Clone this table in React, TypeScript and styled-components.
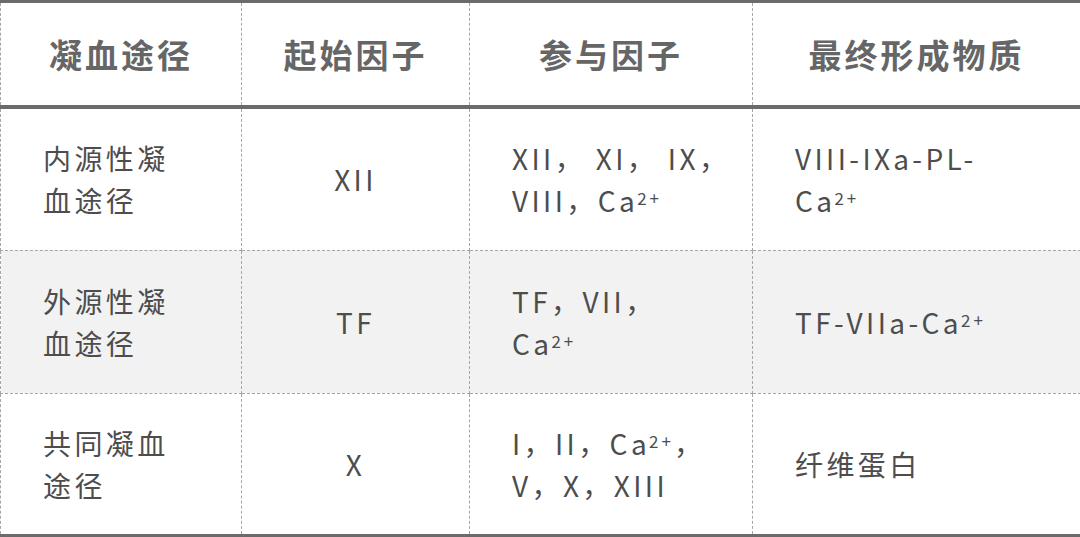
import React, { FC } from "react";
import styled, { createGlobalStyle } from "styled-components";

const LINE_COLOR = "#6b6b6b";
const DASH_COLOR = "#a6a6a6";
const ION = "²⁺";

interface PathRow {
  name: string[];
  start: string;
  factors: string[];
  product: string[];
}

const COLUMNS = ["凝血途径", "起始因子", "参与因子", "最终形成物质"];

const ROWS: PathRow[] = [
  {
    name: ["内源性凝", "血途径"],
    start: "XII",
    factors: ["XII， XI， IX，", "VIII，Ca²⁺"],
    product: ["VIII-IXa-PL-", "Ca²⁺"],
  },
  {
    name: ["外源性凝", "血途径"],
    start: "TF",
    factors: ["TF，VII，", "Ca²⁺"],
    product: ["TF-VIIa-Ca²⁺"],
  },
  {
    name: ["共同凝血", "途径"],
    start: "X",
    factors: ["I，II，Ca²⁺，", "V，X，XIII"],
    product: ["纤维蛋白"],
  },
];

const GlobalStyle = createGlobalStyle`
  html, body {
    margin: 0;
    padding: 0;
    background: #fff;
  }
  body {
    font-family: "Noto Sans CJK SC", "Noto Sans", sans-serif;
  }
`;

// Ca²⁺ is drawn with a smaller raised "2+" like the original
const renderIons = (text: string) => {
  const parts = text.split(ION);
  return parts.map((part, i) => (
    <React.Fragment key={i}>
      {part}
      {i < parts.length - 1 && <Sup>2+</Sup>}
    </React.Fragment>
  ));
};

const Lines: FC<{ lines: string[] }> = ({ lines }) => (
  <>
    {lines.map((line, i) => (
      <Line key={i}>{renderIons(line)}</Line>
    ))}
  </>
);

const App: FC = () => {
  return (
    <>
      <GlobalStyle />
      <Table>
        <colgroup>
          <col style={{ width: 241 }} />
          <col style={{ width: 228 }} />
          <col style={{ width: 283 }} />
          <col style={{ width: 328 }} />
        </colgroup>
        <thead>
          <tr>
            {COLUMNS.map((c) => (
              <HeadCell key={c}>{c}</HeadCell>
            ))}
          </tr>
        </thead>
        <tbody>
          {ROWS.map((row, i) => (
            <Row key={i} $shaded={i % 2 === 1}>
              <Cell>
                <Lines lines={row.name} />
              </Cell>
              <Cell $center>{row.start}</Cell>
              <Cell>
                <Lines lines={row.factors} />
              </Cell>
              <Cell>
                <Lines lines={row.product} />
              </Cell>
            </Row>
          ))}
        </tbody>
      </Table>
    </>
  );
};

const Table = styled.table`
  width: 1080px;
  table-layout: fixed;
  border-collapse: collapse;
  border-top: 3px solid ${LINE_COLOR};
  border-bottom: 4px solid ${LINE_COLOR};
`;

const HeadCell = styled.th`
  height: 102px;
  padding: 0;
  text-align: center;
  vertical-align: middle;
  font-size: 33px;
  font-weight: 700;
  letter-spacing: 3px;
  color: #666;
  border-left: 1px dashed ${DASH_COLOR};
  border-right: 1px dashed ${DASH_COLOR};
  border-bottom: 4px solid ${LINE_COLOR};
`;

const Row = styled.tr<{ $shaded?: boolean }>`
  height: 143px;
  background: ${(p) => (p.$shaded ? "#f2f2f2" : "#fff")};
`;

const Cell = styled.td<{ $center?: boolean }>`
  padding: 0 20px 0 42px;
  ${(p) => p.$center && "padding: 0; text-align: center;"}
  vertical-align: middle;
  font-size: 28px;
  line-height: 42px;
  letter-spacing: 3.4px;
  color: #4d4d4d;
  border: 1px dashed ${DASH_COLOR};
  tr:last-child > & {
    border-bottom: 4px solid ${LINE_COLOR};
  }
`;

const Line = styled.div`
  white-space: nowrap;
`;

const Sup = styled.span`
  font-size: 17px;
  line-height: 0;
  letter-spacing: 3px;
  vertical-align: 7px;
  margin-left: -1px;
`;

export default App;
